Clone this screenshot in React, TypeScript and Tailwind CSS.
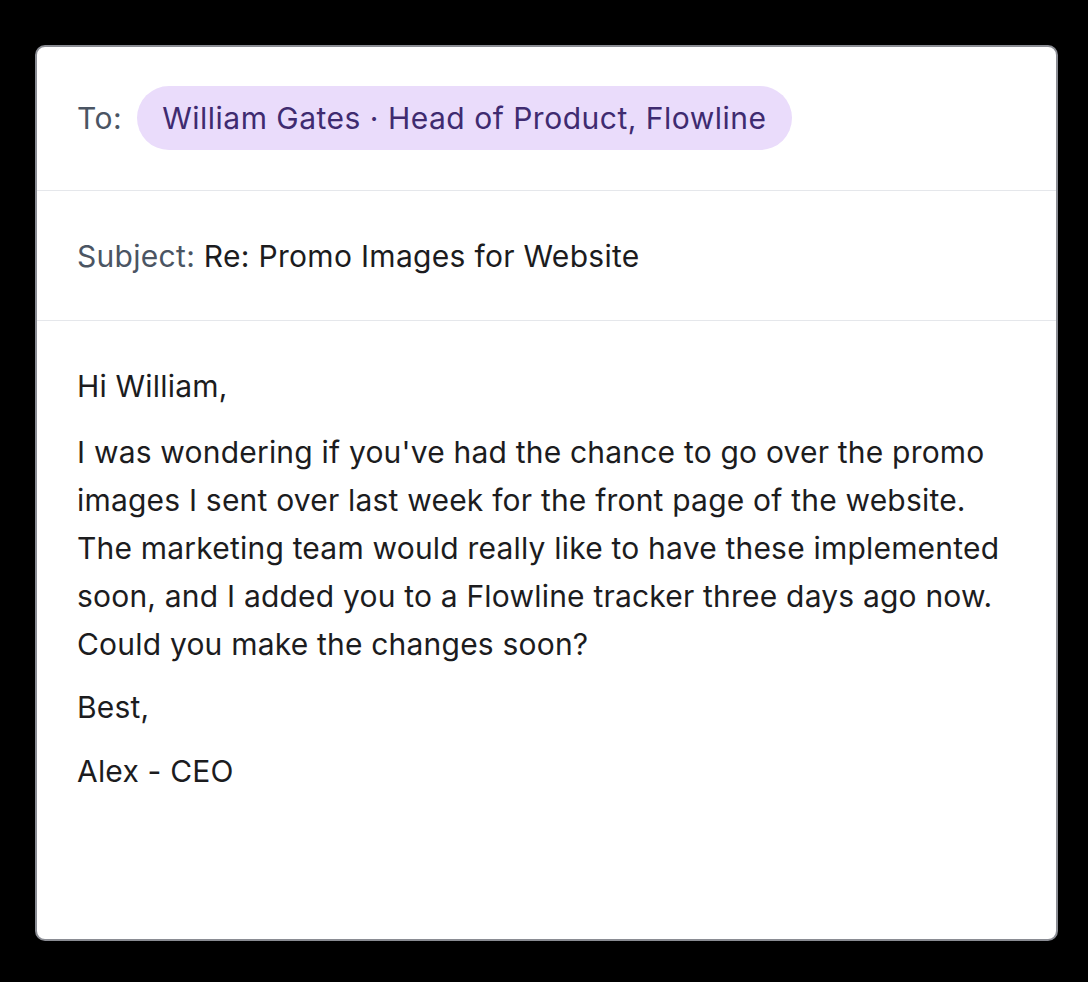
import React from 'react';

const App: React.FC = () => {
  return (
    <div className="min-h-[982px] w-full bg-black px-[35px] pt-[45px] font-['Inter','Helvetica',sans-serif]">
      <div className="flex h-[896px] w-[1023px] flex-col overflow-hidden rounded-[10px] border-2 border-[#8a8c93] bg-white">
        {/* To */}
        <div className="flex items-center gap-[15px] border-b border-[#e5e7eb] pl-[40px] pt-[39px] pb-[40px] tracking-[0.5px]">
          <span className="text-[30px] text-[#4b5563]">To:</span>
          <span className="flex h-[64px] items-center rounded-full bg-[#eadcfb] px-[25px] text-[30px] text-[#3f2b70]">
            William Gates · Head of Product, Flowline
          </span>
        </div>

        {/* Subject */}
        <div className="border-b border-[#e5e7eb] pl-[40px] pt-[41px] pb-[40px] text-[30px] leading-[48px] tracking-[0.3px]">
          <span className="text-[#4b5563]">Subject: </span>
          <span className="text-[#1c1c1e]">Re: Promo Images for Website</span>
        </div>

        {/* Body */}
        <div className="flex flex-col px-[40px] pt-[41px] text-[30px] leading-[48px] tracking-[0.2px] text-[#1c1c1e]">
          <p className="mb-[18px]">Hi William,</p>
          <p className="mb-[15px] whitespace-nowrap">
            I was wondering if you've had the chance to go over the promo
            <br />
            images I sent over last week for the front page of the website.
            <br />
            The marketing team would really like to have these implemented
            <br />
            soon, and I added you to a Flowline tracker three days ago now.
            <br />
            Could you make the changes soon?
          </p>
          <p className="mb-[16px]">Best,</p>
          <p>Alex - CEO</p>
        </div>
      </div>
    </div>
  );
};

export default App;
